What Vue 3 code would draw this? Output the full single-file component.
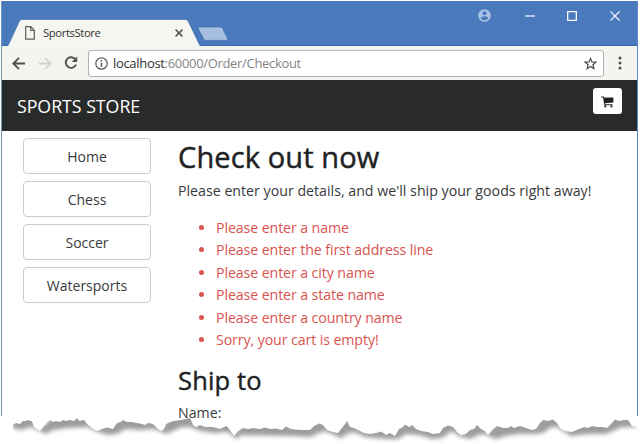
<script setup>
const categories = ['Home', 'Chess', 'Soccer', 'Watersports']
const errors = [
  'Please enter a name',
  'Please enter the first address line',
  'Please enter a city name',
  'Please enter a state name',
  'Please enter a country name',
  'Sorry, your cart is empty!'
]

// Upper contour of the torn paper edge
const ridge = '13,425 16,423 20,424 23,421 26,421 28,420 32,421.5 34,427 40,431 43,427 46,424 48,421 51,420 53,422 56,421 60,422 63,420 66,421 70,420 74,421 77,418 79,421 84,420 87,424 92,428 97,431 102,429 107,427.5 113,429 117,423 121,422 123,420 127,422 132,422 137,423 142,424 145,425 148,423 153,424 157,428 161,431 164,429 166,424 170,422 174,421 181,420 190,418 193,425 196,427 200,425 205,427 213,427 220,429 224,427 226.5,426 230,430 234,436 238,431 243,428 248,429 253,428 260,429 265,427.5 270,429 276,428.5 282,430 286,426.5 291,429 300,430 310,430 314,426 319,423.5 323,425 327,430 333,432 338,433 342,428 345,424 347,421 350,427 354,428 360,431 364,433 370,434 376,433 381.5,431.5 386,435 390,433 395,436 399,429 403,427 405,424.5 409,427 412,425 416,429 421,431 428,432 433,434 440,433 443,428 448,425.5 453,427 457,432 461,435 466,434 470,430 474,429 477,425 481,429 485,431 488,435 493,429 497,426 503,428 508,428 511,426 514,428 520,426 526,428 532,430 536,429 540,423 543,420 548,421 553,419.5 557,423 560,428 565,431 572,432 579,429 584,427 588,428 592,426 597,427 603,427 607,428 611,424 615,419.5 619,421 624,420 628,420 632,426 637,427'
const tear = ridge + ' 637,444 13,444'
const shade = '8,420 34,414 40,428 60,412 90,414 98,428 120,412 154,416 162,428 172,412 194,412 204,420 230,422 235,433 244,422 300,422 320,414 334,428 350,412 362,427 396,428 408,416 430,428 450,416 462,432 478,416 488,432 500,419 536,420 545,412 558,418 568,429 584,421 606,420 616,412 630,413 637,427 629,427 622,427 615,430 606,434 590,434 580,435 571,436 565,432 557,427 551,427 543,433 535,434 518,434 505,436 496,439 489,436 485,434 478,435 470,439 459,436 452,431 442,438 432,439 419,435 406,434 398,439 386,439 365,437 354,432 347,434 341,438 332,434 325,431 319,433 310,437 295,436 240,435 238,439 234,437 228,432 213,433 200,431 190,427 182,427 173,431 166,434 160,431 153,429 140,430 126,429 116,434 108,435 98,432 88,427 68,428 53,430 46,434 40,431 32,427 20,430 11,427'
</script>

<template>
  <div class="window">
    <div class="frame">
      <header class="titlebar">
        <div class="tab">
          <svg class="tab-shape" width="207" height="27" viewBox="0 0 207 27">
            <path d="M6 27 17.5 2Q18.4.5 20 .5H183Q185 .5 186 2L198 27Z" fill="#f5f6f1" />
            <path d="M6 26.5 17.5 2Q18.4.5 20 .5H183Q185 .5 186 2L198 26.5" fill="none" stroke="#3b67a8" stroke-width=".6" />
          </svg>
          <div class="tab-content">
            <svg width="10" height="14" viewBox="0 0 10 14" fill="none" stroke="#606060" stroke-width="1.2">
              <path d="M.7.7H5.8L9.3 4.3V13.2H.7ZM5.7.8V4.5H9.2" />
            </svg>
            <span class="tab-title">SportsStore</span>
            <svg class="tab-close" width="8" height="8" viewBox="0 0 8 8" stroke="#555" stroke-width="1.5">
              <path d="M.6.6 7.4 7.4M7.4.6.6 7.4" />
            </svg>
          </div>
        </div>
        <svg class="new-tab" width="32" height="16" viewBox="0 0 32 16">
          <path d="M2.2 1H23.5Q25 1 25.7 2.4L30.5 12.5Q31 14.4 29.3 14.4H9Q7.3 14.4 6.5 12.8L1.2 2.6Q.5 1 2.2 1Z" fill="#a6bfe0" stroke="#3e6cb0" stroke-width=".7" />
        </svg>
        <div class="controls">
          <svg width="13" height="13" viewBox="0 0 13 13">
            <circle cx="6.5" cy="6.5" r="6.3" fill="#a9c3e8" />
            <circle cx="6.5" cy="4.3" r="2" fill="#4a7abb" />
            <path d="M2.6 9Q3.5 7.2 6.5 7.2T10.4 9Q9 11.2 6.5 11.2T2.6 9Z" fill="#4a7abb" />
          </svg>
          <svg width="10" height="13" viewBox="0 0 10 13"><path d="M0 7H10" stroke="#fff" stroke-width="1.2" /></svg>
          <svg width="10" height="13" viewBox="0 0 10 13"><path d="M.7 2.7H9.3V11.3H.7Z" fill="none" stroke="#fff" stroke-width="1.2" /></svg>
          <svg width="10" height="13" viewBox="0 0 10 13"><path d="M.4 2.4 9.6 11.6M9.6 2.4.4 11.6" stroke="#fff" stroke-width="1.2" /></svg>
        </div>
      </header>

      <div class="toolbar">
        <svg width="13" height="13" viewBox="0 0 13 13" fill="none" stroke="#505050" stroke-width="1.8"><path d="M13 6.5H1.4M7 .8 1.3 6.5 7 12.2" /></svg>
        <svg class="forward" width="13" height="13" viewBox="0 0 13 13" fill="none" stroke="#d3d4d2" stroke-width="1.8"><path d="M0 6.5H11.6M6 .8 11.7 6.5 6 12.2" /></svg>
        <svg class="reload" width="14" height="14" viewBox="0 0 14 14">
          <path d="M11.3 3.3A5.3 5.3 0 1 0 12 8.5" fill="none" stroke="#505050" stroke-width="1.9" />
          <path d="M13.2.6V6H7.8Z" fill="#505050" />
        </svg>
        <div class="address">
          <svg width="13" height="13" viewBox="0 0 13 13">
            <circle cx="6.5" cy="6.5" r="5.7" fill="none" stroke="#5a5a5a" stroke-width="1.2" />
            <path d="M6.5 5.7V9.8M6.5 3V4.5" stroke="#5a5a5a" stroke-width="1.5" />
          </svg>
          <span class="url"><span class="host">localhost</span>:60000/Order/Checkout</span>
          <svg class="star" width="13" height="13" viewBox="0 0 13 13">
            <path d="M6.5 1.4 7.9 4.9 12 5.1 8.9 7.7 9.9 11.7 6.5 9.5 3.1 11.7 4.1 7.7 1 5.1 5.1 4.9Z" fill="none" stroke="#484848" stroke-width="1.2" />
          </svg>
        </div>
        <svg class="menu" width="4" height="14" viewBox="0 0 4 14" fill="#4f4f4f"><circle cx="2" cy="2" r="1.5" /><circle cx="2" cy="7" r="1.5" /><circle cx="2" cy="12" r="1.5" /></svg>
      </div>

      <nav class="navbar">
        <span class="brand">SPORTS STORE</span>
        <button class="cart" aria-label="Cart">
          <svg width="13" height="12" viewBox="0 0 13 12">
            <path d="M.2.5H2.7L3 1.6H12.4V6.4L4.1 7.3 4.3 8.2H11.5V9.2H3.4L2 1.6H.2Z" fill="#222" />
            <circle cx="4.3" cy="10.4" r="1.1" fill="#222" /><circle cx="10.4" cy="10.4" r="1.1" fill="#222" />
          </svg>
        </button>
      </nav>

      <div class="body">
        <aside class="sidebar">
          <button v-for="category in categories" :key="category">{{ category }}</button>
        </aside>
        <main>
          <h2>Check out now</h2>
          <p class="intro">Please enter your details, and we'll ship your goods right away!</p>
          <ul>
            <li v-for="error in errors" :key="error">{{ error }}</li>
          </ul>
          <h3>Ship to</h3>
          <label>Name:</label>
        </main>
      </div>
    </div>

    <svg class="torn" width="640" height="34" viewBox="0 410 640 34">
      <defs>
        <clipPath id="tear"><polygon :points="tear" /></clipPath>
        <filter id="soft" x="-5%" y="-50%" width="110%" height="200%"><feGaussianBlur stdDeviation="1.9" /></filter>
      </defs>
      <polygon :points="tear" fill="#fff" />
      <g clip-path="url(#tear)"><polygon :points="shade" fill="#9c9c9c" filter="url(#soft)" /></g>
    </svg>
  </div>
</template>

<style>
body {
  background: #fff;
  overflow: hidden;
}
</style>

<style scoped>
* {
  box-sizing: border-box;
}
svg {
  display: block;
  flex: none;
}
.window {
  position: relative;
  width: 640px;
  height: 444px;
  padding: 1px 2px 0 1px;
  font-family: "Open Sans", "Noto Sans", sans-serif;
  color: #373a3c;
}
.frame {
  height: 415px;
  display: flex;
  flex-direction: column;
  border-left: 1px solid #6b9eb8;
  border-right: 1px solid #5b88cc;
}
.titlebar {
  height: 45px;
  flex: none;
  display: flex;
  align-items: flex-end;
  background: #4a7abb;
  box-shadow: inset 0 -1px #3b6cb0;
}
.tab {
  display: grid;
  width: 199px;
  height: 27px;
}
.tab-shape,
.tab-content {
  grid-area: 1 / 1;
}
.tab-content {
  display: flex;
  align-items: center;
  width: 199px;
  padding: 0 18px 0 23px;
}
.tab-title {
  margin-left: 8px;
  font-size: 11.3px;
  letter-spacing: -0.4px;
  color: #333;
}
.tab-close {
  margin-left: auto;
}
.new-tab {
  margin: 0 0 4px -4px;
}
.controls {
  display: flex;
  align-items: center;
  margin: 0 17px 24px auto;
}
.controls svg + svg {
  margin-left: 32px;
}
.controls svg:nth-child(2) {
  margin-left: 34px;
}
.controls svg:nth-child(4) {
  margin-left: 33px;
}
.toolbar {
  height: 34px;
  flex: none;
  display: flex;
  align-items: center;
  padding: 0 15px 0 10px;
  background: #f4f5f0;
}
.forward {
  margin-left: 14px;
}
.reload {
  margin-left: 12px;
}
.address {
  flex: none;
  width: 516px;
  height: 27px;
  margin-left: 10px;
  padding: 0 6px;
  display: flex;
  align-items: center;
  background: #fff;
  border: 1px solid #b3b4b2;
  border-radius: 3px;
}
.url {
  margin-left: 5px;
  font-size: 13px;
  letter-spacing: -0.32px;
  color: #858585;
}
.host {
  color: #303030;
}
.star {
  margin-left: auto;
}
.menu {
  margin-left: auto;
}
.navbar {
  height: 51px;
  flex: none;
  display: flex;
  justify-content: space-between;
  padding: 8px 15px 0;
  background: #292a2a;
}
.brand {
  margin-top: 5px;
  font-size: 17.8px;
  line-height: 26px;
  letter-spacing: -0.04px;
  color: #fff;
}
.cart {
  width: 29px;
  height: 26px;
  padding: 1px 0 0;
  display: grid;
  place-items: center;
  background: #fff;
  border: 0;
  border-radius: 3px;
}
.body {
  display: flex;
  padding: 7px 0 0 21px;
}
.sidebar {
  width: 128px;
  display: flex;
  flex-direction: column;
  gap: 7px;
}
.sidebar button {
  height: 36px;
  padding: 0;
  background: #fff;
  border: 1px solid #ccc;
  border-radius: 4px;
  font: 14px "Open Sans", sans-serif;
  color: #373a3c;
}
main {
  margin-left: 27px;
  white-space: nowrap;
}
h2 {
  margin: 0;
  font-size: 29px;
  letter-spacing: 0.12px;
  line-height: 37px;
  font-weight: 500;
  -webkit-text-stroke: 0.45px #202224;
  color: #202224;
}
.intro {
  margin: 4px 0 15px;
  font-size: 14.2px;
  line-height: 23px;
}
ul {
  margin: 0;
  padding-left: 38px;
  font-size: 14.2px;
  letter-spacing: -0.1px;
  line-height: 22.4px;
  color: #d9534f;
}
h3 {
  margin: 14px 0 5px;
  font-size: 25.5px;
  letter-spacing: 0.15px;
  line-height: 31px;
  font-weight: 500;
  -webkit-text-stroke: 0.4px #202224;
  color: #202224;
}
label {
  display: block;
  font-size: 14.2px;
  line-height: 23px;
}
.torn {
  position: absolute;
  left: 0;
  top: 410px;
}
</style>
